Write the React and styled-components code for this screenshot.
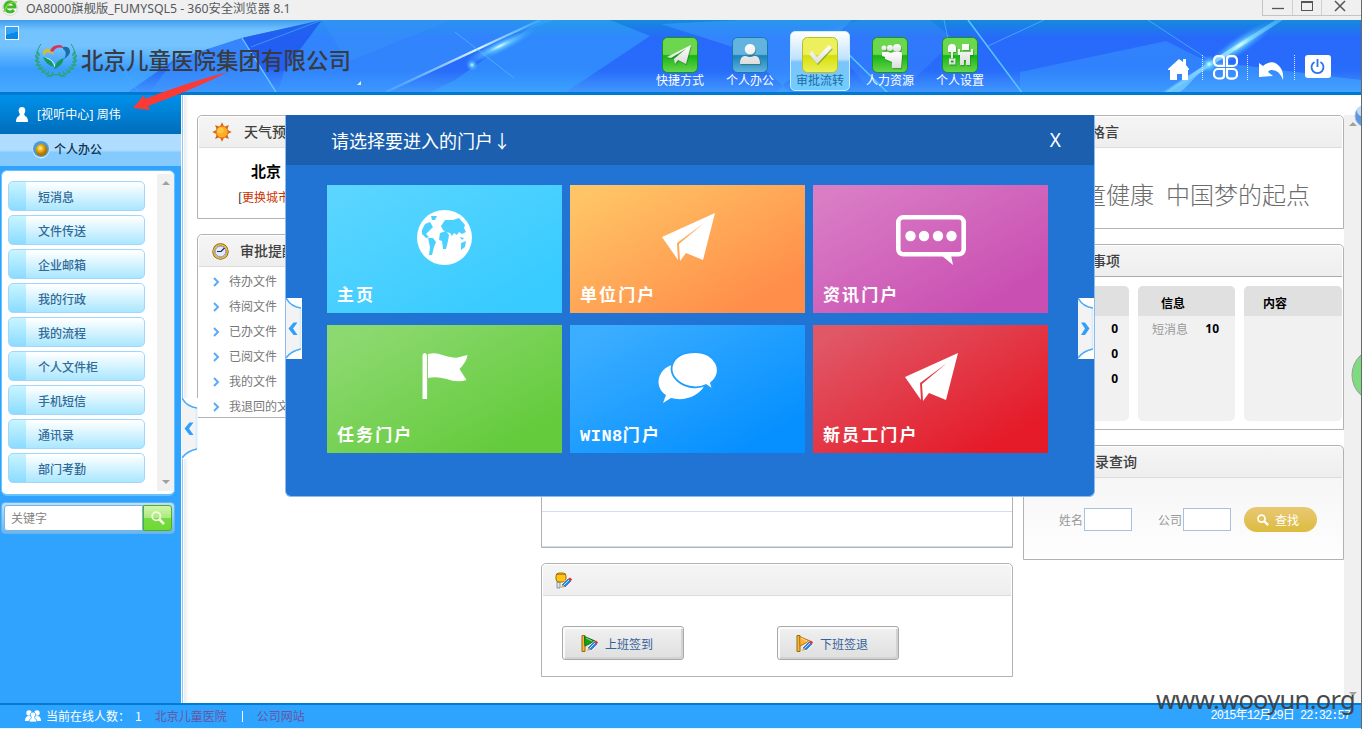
import React from "react";
import styled, { createGlobalStyle, css } from "styled-components";

const sans = '"Noto Sans", "Noto Sans CJK SC", sans-serif';
const cjk = '"Noto Sans CJK SC", sans-serif';

const Global = createGlobalStyle`
  * { box-sizing: border-box; }
  body { margin: 0; overflow: hidden; font-family: ${cjk}; font-size: 12px; }
  svg { display: block; flex: none; }
`;

const Window = styled.div`
  position: relative;
  width: 1362px;
  height: 729px;
  display: flex;
  flex-direction: column;
  background: #fff;
  border-right: 1px solid #66686b;
`;

/* ---------- title bar ---------- */
const TitleBar = styled.div`
  height: 20px;
  flex: none;
  display: flex;
  align-items: flex-start;
  background: #f0f0f0;
  padding-left: 2px;
`;
const TitleText = styled.span`
  flex: 1;
  padding-left: 6px;
  font: 12.3px/17px ${sans};
  color: #55585e;
`;
const WindowButtons = styled.div`
  display: flex;
  height: 16px;
  width: 99px;
  border: 1px solid #c4c4c4;
  border-width: 0 0 1px 1px;
`;
const WindowButton = styled.div`
  width: ${(p) => p.$w}px;
  display: flex;
  justify-content: center;
  border-left: ${(p) => (p.$first ? 0 : 1)}px solid #cfcfcf;
`;

/* ---------- header ---------- */
const HeaderBar = styled.header`
  position: relative;
  height: 75px;
  flex: none;
  display: flex;
  border-bottom: 3px solid #0079d2;
  background: #2b74fb;
`;
const Backdrop = styled.svg`
  position: absolute;
  inset: 0;
`;
const CornerSquare = styled.i`
  position: absolute;
  left: 5px;
  top: 6px;
  width: 14px;
  height: 14px;
  border: 1px solid #fff;
  background: linear-gradient(165deg, #35a4f5 50%, #0889ea 52%);
`;
const Brand = styled.div`
  position: relative;
  width: 650px;
  display: flex;
  align-items: flex-start;
  padding: 22px 0 0 34px;
  gap: 3px;
`;
const BrandName = styled.h1`
  margin: -4px 0 0;
  font: 500 22.5px/42px ${cjk};
  height: 42px;
  color: #393b42;
  white-space: nowrap;
`;
const Nav = styled.nav`
  position: relative;
  flex: 1;
  display: flex;
  gap: 10px;
  padding-top: 11px;
`;
const NavItem = styled.a`
  width: 60px;
  height: 60px;
  display: flex;
  flex-direction: column;
  align-items: center;
  padding-top: ${(p) => (p.$active ? 5 : 6)}px;
  border-radius: 5px;
  font: 12px/14px ${cjk};
  color: ${(p) => (p.$active ? "#1c6ba8" : "#fff")};
  white-space: nowrap;
  ${(p) =>
    p.$active &&
    css`
      border: 1px solid #c9ecff;
      background: linear-gradient(#fff 0, #c0e2fd 46%, #7cc4fb 52%, #6fcdfd 100%);
    `}
`;
const Tools = styled.div`
  position: relative;
  display: flex;
  align-items: flex-start;
  padding: 35px 30px 0 0;
`;
const Dots = styled.i`
  height: 25px;
  border-left: 1px dotted #d8ecff;
  margin: 0 ${(p) => p.$after}px 0 ${(p) => p.$before}px;
`;

/* ---------- body ---------- */
const Body = styled.div`
  flex: 1;
  min-height: 0;
  display: flex;
`;
const Sidebar = styled.aside`
  position: relative;
  width: 182px;
  flex: none;
  background: #2fa3fd;
  border-right: 1px solid #fff;
`;
const UserBar = styled.div`
  height: 39px;
  display: flex;
  align-items: center;
  gap: 9px;
  padding-left: 16px;
  color: #fff;
  font: 12px/38px ${sans};
  letter-spacing: 0.1px;
  background: linear-gradient(#0091ea, #006dbb);
`;
const SectionBar = styled.div`
  height: 32px;
  display: flex;
  align-items: center;
  padding: 0 0 2px 32px;
  gap: 4px;
  font: 500 12px/30px ${cjk};
  color: #0d3453;
  background: linear-gradient(#b0ddff 0 50%, #85cafc 58% 100%);
`;
const MenuBox = styled.div`
  display: flex;
  justify-content: space-between;
  margin: 4px 6px 0 1px;
  height: 326px;
  border: 2px solid #68c3fc;
  border-width: 1px 1px 2px;
  border-radius: 6px;
  background: #fff;
`;
const MenuList = styled.div`
  display: flex;
  flex-direction: column;
  gap: 4px;
  padding: 10px 0 0 6px;
`;
const MenuItem = styled.a`
  width: 137px;
  height: 30px;
  padding-left: 29px;
  border: 1px solid #a1d7fe;
  border-radius: 5px;
  font: 500 12px/30px ${cjk};
  color: #316b98;
  background:
    linear-gradient(#c9f5ff, #8bdbff) 0 0 / 17px 100% no-repeat,
    linear-gradient(#fdffff 5%, #aee8ff 95%);
`;
const SideScroll = styled.div`
  display: flex;
  flex-direction: column;
  justify-content: space-between;
  align-items: center;
  width: 17px;
  height: 317px;
  margin-top: 3px;
  padding: 7px 0;
  background: #f1f1f1;
`;
const Arrow = styled.i`
  border: 4px solid transparent;
  ${(p) =>
    p.$up
      ? "border-top: 0; border-bottom-color: #a0a0a0;"
      : "border-bottom: 0; border-top-color: #a0a0a0;"}
`;
const SearchBox = styled.div`
  display: flex;
  height: 32px;
  margin: 6px 6px 0 1px;
  padding: 2px;
  border: 1px solid #67b4ec;
  border-radius: 4px;
  background: linear-gradient(#bde0fb, #6ab6ef);
`;
const SearchField = styled.div`
  flex: 1;
  padding-left: 6px;
  border: 1px solid #73b6e8;
  border-radius: 3px 0 0 3px;
  background: #fff;
  color: #858585;
  font: 12px/23px ${cjk};
`;
const SearchButton = styled.div`
  width: 29px;
  display: flex;
  align-items: center;
  justify-content: center;
  border: 1px solid #52ae22;
  border-radius: 0 3px 3px 0;
  background: linear-gradient(#d1f6ad 0, #abea7c 48%, #78d945 50%, #6edb32 100%);
`;

const Main = styled.main`
  position: relative;
  flex: 1;
  display: flex;
  padding-top: 20px;
  border-left: 1px solid #8ec9f7;
  background: linear-gradient(90deg, #ececec, #fff 5px) 1px 0 / 5px 100% no-repeat, #fff;
`;
const Column = styled.div`
  width: ${(p) => p.$w}px;
  margin-left: ${(p) => p.$gap}px;
  display: flex;
  flex-direction: column;
  gap: 15px;
`;
const PageScroll = styled.div`
  flex: 1;
  display: flex;
  flex-direction: column;
  align-items: center;
  justify-content: space-between;
  padding: 7px 0 7px;
  background: #f0f0f0;
`;
const Panel = styled.section`
  height: ${(p) => p.$h}px;
  border: 1px solid #b2b2b2;
  border-radius: 5px 5px 0 0;
  background: ${(p) => (p.$tint ? "linear-gradient(#f3f3f3, #fefefe)" : "#fff")};
`;
const PanelHead = styled.div`
  height: 32px;
  margin: 0 1px;
  display: flex;
  align-items: center;
  padding-left: ${(p) => p.$pad || 13}px;
  gap: ${(p) => p.$gap || 9}px;
  border-top: 1px solid #fff;
  border-bottom: 1px solid ${(p) => (p.$strong ? "#aaa" : "#dcdcdc")};
  border-radius: 4px 4px 0 0;
  background: linear-gradient(#f5f5f5, #eee);
  font: 500 14px/26px ${cjk};
  color: #404040;
`;
const HeadText = styled.span`
  height: 29px;
`;
const Weather = styled.div`
  padding: 10px 0 0 40px;
  color: #000;
  font: 12px/27px ${cjk};
`;
const City = styled.div`
  padding-left: 13px;
  font: 700 15px/25px ${cjk};
`;
const CityLink = styled.span`
  color: #cc3300;
`;
const FileRow = styled.div`
  height: 25px;
  display: flex;
  align-items: center;
  gap: 9px;
  padding: 4px 0 0 15px;
  color: #787878;
  font: 12px/21px ${cjk};
  span { height: 23px; }
`;
const ListRow = styled.div`
  height: ${(p) => p.$h}px;
  border-bottom: 1px solid #cfdfec;
`;
const Motto = styled.div`
  padding: 26px 33px 0 0;
  text-align: right;
  font: 300 24px/40px ${cjk};
  color: #6c6c6c;
  white-space: nowrap;
`;
const CardRow = styled.div`
  display: flex;
  gap: 9px;
  padding: 9px 1px 0 8px;
`;
const Card = styled.div`
  width: 97px;
  height: 135px;
  border-radius: 5px;
  overflow: hidden;
  background: #f1f1f1;
  &:last-child { flex: 1; }
`;
const CardHead = styled.div`
  height: 30px;
  padding-left: ${(p) => p.$pad || 0}px;
  background: #e0e0e0;
  font: 700 12px/34px ${cjk};
`;
const CardLine = styled.div`
  height: 25px;
  display: flex;
  justify-content: space-between;
  padding: 0 ${(p) => p.$right}px 0 14px;
  color: #999;
  font: 12px/26px ${cjk};
  b { color: #000; font: 700 12px/26px "Noto Sans", sans-serif; }
`;
const LookupForm = styled.div`
  display: flex;
  align-items: center;
  padding: 29px 0 0 35px;
  color: #999;
  font: 12px/22px ${cjk};
`;
const Box = styled.span`
  width: 48px;
  height: 23px;
  margin: 0 ${(p) => p.$after}px 0 1px;
  border: 1px solid #a9c1e0;
  background: #fff;
`;
const GoldButton = styled.div`
  width: 73px;
  height: 25px;
  display: flex;
  align-items: center;
  padding-left: 13px;
  gap: 6px;
  border-radius: 13px;
  color: #fff;
  font: 12px/27px ${cjk};
  background: linear-gradient(#e9c875, #dcbc3e);
`;
const ClockRow = styled.div`
  display: flex;
  gap: 93px;
  padding: 30px 0 0 20px;
`;
const ClockButton = styled.div`
  width: 122px;
  height: 34px;
  display: flex;
  align-items: center;
  gap: 6px;
  padding-left: 18px;
  border: 1px solid #a9a9a9;
  border-radius: 3px;
  box-shadow: inset 2px 2px 0 #fbfbfb, inset -2px -2px 0 #d3d3d3;
  background: linear-gradient(#f1f1f1, #dfdfdf);
  color: #33619b;
  font: 12px/35px ${cjk};
`;

/* ---------- portal dialog ---------- */
const Dialog = styled.div`
  position: absolute;
  left: 285px;
  top: 115px;
  width: 810px;
  height: 382px;
  border: 1px solid #8cbcef;
  border-top: 0;
  border-radius: 0 0 6px 6px;
  background: #2174d4;
`;
const DialogHead = styled.div`
  height: 50px;
  display: flex;
  justify-content: space-between;
  padding: 0 33px 0 45px;
  background: #1b5fae;
  color: #fff;
  font: 18px/50px ${cjk};
`;
const CloseMark = styled.span`
  font: 19px/50px "Noto Sans", sans-serif;
`;
const Tiles = styled.div`
  display: grid;
  grid-template-columns: repeat(3, 235px);
  grid-auto-rows: 128px;
  gap: 12px 8px;
  padding: 20px 0 0 41px;
`;
const Tile = styled.a`
  display: flex;
  flex-direction: column;
  justify-content: space-between;
  align-items: center;
  padding: 22px 0 3px;
  background: linear-gradient(151deg, ${(p) => p.$from} 8%, ${(p) => p.$to} 85%);
`;
const TileName = styled.span`
  align-self: stretch;
  padding-left: 10px;
  color: #fff;
  font: 700 17px/26px "Liberation Mono", ${cjk};
  letter-spacing: 2.1px;
`;
const Latin = styled.span`
  letter-spacing: 0.5px;
`;
const Handle = styled.div`
  position: absolute;
  top: ${(p) => p.$top}px;
  left: ${(p) => p.$left}px;
`;

/* ---------- footer & overlays ---------- */
const Footer = styled.footer`
  height: 26px;
  flex: none;
  display: flex;
  align-items: center;
  padding-left: 25px;
  border-top: 2px solid #007cd4;
  border-bottom: 1px solid #e8f4fd;
  background: #2ea4fe;
  color: #fff;
  font: 12px/22px ${cjk};
`;
const FootText = styled.span`
  height: 24px;
  margin-left: ${(p) => p.$left}px;
  color: ${(p) => (p.$visited ? "#6955a4" : "#fff")};
`;
const Stamp = styled.time`
  height: 24px;
  margin: 0 11px 0 auto;
  font: 12px/23px "Liberation Mono", ${cjk};
  letter-spacing: -0.95px;
`;
const Divider = styled.i`
  width: 1px;
  height: 11px;
  margin: 0 14px 0 15px;
  background: #fff;
`;
const Overlay = styled.svg`
  position: absolute;
  left: ${(p) => p.$x}px;
  top: ${(p) => p.$y}px;
`;
const Watermark = styled.div`
  position: absolute;
  right: 6px;
  top: 683px;
  font: 25.5px/32px "Noto Sans", sans-serif;
  letter-spacing: -0.72px;
  color: #3b3d40;
  opacity: 0.93;
`;

/* ---------- drawings ---------- */
const HeaderArt = () => (
  <Backdrop width="1361" height="72" viewBox="0 0 1361 72" preserveAspectRatio="none">
    <defs>
      <linearGradient id="hLeft" x2="0" y2="1">
        <stop offset="0" stopColor="#3f9df0" />
        <stop offset=".14" stopColor="#72c2fe" />
        <stop offset=".36" stopColor="#74c3fe" />
        <stop offset=".68" stopColor="#3a9dfd" />
        <stop offset="1" stopColor="#48a9fe" />
      </linearGradient>
      <linearGradient id="hMid" x2="0" y2="1">
        <stop offset="0" stopColor="#158add" />
        <stop offset=".25" stopColor="#2869fb" />
        <stop offset=".7" stopColor="#286cfa" />
        <stop offset="1" stopColor="#4096fd" />
      </linearGradient>
      <linearGradient id="beam" x1="0" y1="1" x2="1" y2="0">
        <stop offset="0" stopColor="#6dc8ff" stopOpacity=".3" />
        <stop offset=".6" stopColor="#dffaff" />
        <stop offset="1" stopColor="#45bfff" stopOpacity=".5" />
      </linearGradient>
      <radialGradient id="glow"><stop offset="0" stopColor="#eaffff" /><stop offset=".3" stopColor="#70dcff" stopOpacity=".75" /><stop offset="1" stopColor="#36a7ff" stopOpacity="0" /></radialGradient>
    </defs>
    <rect width="1361" height="72" fill="url(#hMid)" />
    <path d="M0 0H322L242 18L174 40L128 72H0Z" fill="url(#hLeft)" />
    <path d="M174 40L242 18L276 72H150Z" fill="#3f97fd" opacity=".6" />
    <path d="M242 18L322 0L284 51L262 49Z" fill="#225bf0" opacity=".75" />
    <path d="M284 51L322 0H555L500 18L386 72H278Z" fill="#3b99ff" opacity=".55" />
    <path d="M322 0H452L347 42Z" fill="#3592f7" opacity=".5" />
    <path d="M455 60L540 0H610L650 16L566 72H430Z" fill="#3aafff" opacity=".45" />
    <path d="M742 0H852L776 72H790L742 30L661 4Z" fill="#42a7ff" opacity=".45" />
    <path d="M860 0H930L955 20L900 72H872L820 12Z" fill="#4698ff" opacity=".3" />
    <path d="M1020 52L1166 21L1216 46L1166 72H1020Z" fill="#39a0ff" opacity=".45" />
    <path d="M1167 72L1216 42L1361 60V72Z" fill="#4ab2ff" opacity=".45" />
    <g fill="none">
      <path d="M242 18L276 72" stroke="#67caff" strokeWidth="1.3" />
      <path d="M322 0L251 27M120 45L138 72" stroke="#45abff" opacity=".7" />
      <path d="M386 72L540 0" stroke="url(#beam)" strokeWidth="2.3" />
      <path d="M455 12L514 58" stroke="#56baff" opacity=".7" />
      <path d="M832 18L887 72M968 0L1026 78" stroke="#57c8ff" strokeWidth="1.5" />
      <path d="M988 26L1044 0M944 0L952 38M1148 0L1206 38" stroke="#4bb5ff" opacity=".75" />
      <path d="M1160 76L1284 -3" stroke="url(#beam)" strokeWidth="4" />
    </g>
    <path d="M1150 82L1209 43L1184 69L1166 82Z" fill="#80d4ff" opacity=".65" />
    <ellipse cx="500" cy="26" rx="40" ry="7" transform="rotate(-26 500 26)" fill="url(#glow)" />
    <circle cx="472" cy="45" r="6" fill="url(#glow)" />
    <ellipse cx="1240" cy="25" rx="42" ry="9" transform="rotate(-34 1240 25)" fill="url(#glow)" />
    <circle cx="1209" cy="44" r="9" fill="url(#glow)" />
  </Backdrop>
);

const leafAngles = [0, 1, 2, 3, 4, 5, 6, 7];
const Logo = () => (
  <svg width="44" height="36" viewBox="0 0 44 36">
    <g fill="none" stroke="#279f72" strokeWidth="1">
      <path d="M7 2C-1 13 2 29 17 34M37 2C45 13 42 29 27 34M13 35Q22 30 31 35" />
    </g>
    <g fill="#2ca877">
      {leafAngles.map((i) => {
        const t = (200 - i * 14) * (Math.PI / 180);
        const x = 22 + 19 * Math.cos(t), y = 17 + 16 * Math.sin(t);
        return (
          <g key={i}>
            <ellipse cx={x} cy={y} rx="3" ry="1.1" transform={`rotate(${60 - i * 18} ${x} ${y})`} />
            <ellipse cx={44 - x} cy={y} rx="3" ry="1.1" transform={`rotate(${120 + i * 18} ${44 - x} ${y})`} />
          </g>
        );
      })}
    </g>
    <path d="M9 12Q9 6 15 7Q19 8 20 13Q15 9 12 11Q10 12 11 15Z" fill="#d9bd2f" />
    <path d="M16 9Q18 3 25 3Q29 3 29 6Q22 4 19 10Z" fill="#d93355" />
    <path d="M29 5Q36 4 36 10Q35 14 30 17Q34 10 29 7Z" fill="#176fa8" />
    <g fill="none" stroke="#e7fbff" strokeWidth="1"><path d="M12 16Q20 18 21 25L29 17" /></g>
    <path d="M9 15Q18 17 20 25Q12 23 9 15M30 16Q22 18 20 27Q28 25 30 16" fill="#129a5c" />
  </svg>
);

const palette = {
  green: ["#6bd64e", "#16b416", "#149420"],
  blue: ["#62b4de", "#1b82b9", "#1878af"],
  yellow: ["#ecf05c", "#d5df08", "#b5bf28"],
};
const glyphs = {
  plane: <path d="M5 20L29 8L24 27L16 23L13 27L12 22L25 11L9 21Z" />,
  person: <path d="M18 7a5.3 5.3 0 1 0 .1 0M8 27q0-9 6-8q4 2 8 0q6-1 6 8z" />,
  check: <path d="M7 17L10 14L15 20L27 8L30 11L15 27Z" />,
  people: (
    <g>
      <circle cx="12" cy="11" r="2.5" /><circle cx="18" cy="11" r="3" /><circle cx="25" cy="11" r="4" />
      <path d="M10 15h6l3 1l3-1h6q3 0 2 5l-1 11h-9v-6l-7-3v-2l-3-1z" />
    </g>
  ),
  tools: (
    <g>
      <path d="M10 7a4 4 0 0 0-4 4v4h3v6h2v-6h3v-4a4 4 0 0 0-4-4M7 21.500h6.500v6H7zM20 7h7v6h-7zM16 12h2v3h11v-3h2v6h-3v10h-4v-5h-2v5h-4V18h-2z" />
      <rect x="9" y="23.500" width="2.500" height="2" fill="#25a526" />
    </g>
  ),
};
const AppIcon = ({ kind, color }) => {
  const [a, b, edge] = palette[color];
  return (
    <svg width="36" height="36" viewBox="0 0 36 36">
      <defs>
        <linearGradient id={`app-${kind}`} x2="0" y2="1">
          <stop offset="0" stopColor={a} /><stop offset=".48" stopColor={a} /><stop offset=".52" stopColor={b} /><stop offset="1" stopColor={a} />
        </linearGradient>
        <linearGradient id={`ink-${kind}`} x2="0" y2="1"><stop stopColor="#fff" /><stop offset="1" stopColor="#dcdcdc" /></linearGradient>
      </defs>
      <rect x=".5" y=".5" width="35" height="35" rx="5" fill={`url(#app-${kind})`} stroke={edge} />
      <g fill="#145014" opacity=".35" transform="translate(.8 1.2)">{glyphs[kind]}</g>
      <g fill={`url(#ink-${kind})`}>{glyphs[kind]}</g>
    </svg>
  );
};

const Plane = () => (
  <svg width="54" height="60" viewBox="-1 0 54 60">
    <path d="M0 30L53 6L41 53L24 46L18 54L17 37L42 16L15 36L16 53Z" fill="#fff" />
  </svg>
);
const Globe = ({ sea }) => (
  <svg width="56" height="60" viewBox="0 0 56 60">
    <circle cx="27.500" cy="30.500" r="27.500" fill="#fff" />
    <g fill={sea}>
      <path d="M5 23L8 17L13 15L16 20L13 23L11 25L9 27L12 30L9 31L5 27Z" />
      <path d="M14 9L20 9L18 13L15 13Z" />
      <path d="M11 31L16 31L19 35L17 40L15 48H12L13 40Z" />
      <path d="M24 19L28 13L36 13L42 11L48 18L47 21L49 25L45 27L42 25L40 28L37 26L35 29L33 26L29 25L26 23Z" />
      <path d="M23 26L29 24L32 28L31 34L29 42H26L25 34L22 33Z" />
      <path d="M44 36L49 34L48 40L44 43ZM43 30L47 31L45 33Z" />
    </g>
  </svg>
);
const Message = () => (
  <svg width="70" height="60" viewBox="0 0 70 60">
    <path d="M45 48L57 58L55 48" fill="#fff" />
    <rect x="2.3" y="10.3" width="65.4" height="37" rx="5" fill="none" stroke="#fff" strokeWidth="4.6" />
    <g fill="#fff">{[14.5, 28, 42, 55.5].map((x) => <circle key={x} cx={x} cy="29" r="5.2" />)}</g>
  </svg>
);
const Flag = () => (
  <svg width="46" height="60" viewBox="-.5 0 46 60">
    <path d="M0 8Q2 4 4.600 8V52H0ZM5.500 7Q13 5 20 8Q33 12 37 10L45 8Q44 15 37 22L44 33Q35 36 24 32Q14 29 5.500 31Z" fill="#fff" />
  </svg>
);
const Chats = ({ line }) => (
  <svg width="62" height="60" viewBox="0 0 62 60">
    <path d="M19 17C2 19-5 39 9 48L6 56L14 51C28 55 43 48 47 39Z" fill="#fff" />
    <path d="M38 5C14 5 8 25 22 35C31 42 43 41 49 38L56 43L54 36C68 25 59 5 38 5Z" fill="#fff" stroke={line} strokeWidth="1.8" />
  </svg>
);

const Grip = ({ right, tall = 61 }) => (
  <svg width="16" height={tall} viewBox={`0 0 16 ${tall}`}>
    <rect width="16" height={tall} fill="#fff" />
    <path d={`M0 1Q5 9 15 10V${tall - 10}Q5 ${tall - 8} 0 ${tall - 1}Z`} fill="#f3f3f3" />
    <path d={`M14.5 10V${tall - 10}`} stroke="#d8ecff" strokeWidth="2" />
    <path d={`M0 0Q5 9 15 10M0 ${tall - 1}Q5 ${tall - 8} 15 ${tall - 10}`} fill="none" stroke="#48abfb" strokeWidth="1.5" />
    <path
      d={right ? "M3 24.500h4l4.500 6-4.500 6.500H3l4-6.500z" : "M11.500 24.500H7.500l-5 6 5 6.500h4l-4.500-6.500z"}
      fill="#31a0fc"
    />
  </svg>
);

const Lens = ({ s = 14, c = "#fff", w = 2 }) => (
  <svg width={s} height={s} viewBox="0 0 14 14" fill="none" stroke={c}>
    <circle cx="5.3" cy="5.3" r="4.1" strokeWidth={w} />
    <path d="M8.5 8.5L13 13" strokeWidth={w + 0.7} />
  </svg>
);
const Pencil = () => (
  <g transform="translate(6 5)">
    <path d="M0 11L1 7L7 1L11 4L4 11Z" fill="#fff" />
    <path d="M1 8L7 2L10 4L4 10Z" fill="#2784ea" stroke="#1852a6" strokeWidth=".6" />
    <path d="M2.5 8.5L8 3" stroke="#b6e5ff" />
    <path d="M7 2L9 .5L11 2.5L10 4Z" fill="#e42636" />
    <path d="M0 11L1 8L4 10Z" fill="#dda74b" />
  </g>
);
const FlagPencil = ({ color, edge }) => (
  <svg width="18" height="17" viewBox="0 0 18 17">
    <path d="M1 .5H4V16.5H1Z" fill="#f1ba3c" stroke="#9c6908" />
    <path d="M3.5 1.5L14 6L4 11Z" fill={color} stroke={edge} />
    <path d="M5 3L11 6" stroke="#fff" opacity=".55" />
    <Pencil />
  </svg>
);
const WriterIcon = () => (
  <svg width="17" height="17" viewBox="0 0 17 17">
    <path d="M2 10H5V16H2Z" fill="#dfe4ec" stroke="#515b70" strokeWidth=".6" />
    <rect x="1" y="1" width="10" height="9" rx="3" fill="#ffc512" stroke="#9f6d05" />
    <path d="M2 2.5H10" stroke="#b98514" />
    <Pencil />
  </svg>
);
const Sun = () => (
  <svg width="20" height="20" viewBox="0 0 20 20">
    <g fill="#d4641e">
      {[0, 45, 90, 135, 180, 225, 270, 315].map((a) => (
        <path key={a} d="M8 4.500L10 .2L12 4.500Z" transform={`rotate(${a} 10 10)`} />
      ))}
    </g>
    <circle cx="10" cy="10" r="6" fill="#ffae21" stroke="#e07316" />
    <circle cx="8.5" cy="8.5" r="3" fill="#ffd455" opacity=".7" />
  </svg>
);
const Clock = () => (
  <svg width="17" height="17" viewBox="0 0 17 17">
    <circle cx="8.5" cy="8.5" r="7" fill="#dfe7ff" stroke="#7b5b09" strokeWidth="2.3" />
    <circle cx="8.5" cy="8.5" r="6.7" fill="none" stroke="#f0c13b" strokeWidth="1.4" />
    <circle cx="8.5" cy="8.5" r="5.3" fill="#e1e8ff" stroke="#7b80d9" strokeWidth=".8" />
    <path d="M5 8.500H9L12.500 5" fill="none" stroke="#202a4a" strokeWidth="1.2" />
  </svg>
);
const Bullet = () => (
  <svg width="7" height="10" viewBox="0 0 7 10"><path d="M1 1L5 5L1 9" fill="none" stroke="#5aaafa" strokeWidth="2" /></svg>
);

const navItems = [
  ["plane", "green", "快捷方式"],
  ["person", "blue", "个人办公"],
  ["check", "yellow", "审批流转"],
  ["people", "green", "人力资源"],
  ["tools", "green", "个人设置"],
];
const menu = ["短消息", "文件传送", "企业邮箱", "我的行政", "我的流程", "个人文件柜", "手机短信", "通讯录", "部门考勤"];
const files = ["待办文件", "待阅文件", "已办文件", "已阅文件", "我的文件", "我退回的文件"];
const tiles = [
  { name: "主页", from: "#59d5ff", to: "#38cbff", icon: <Globe sea="#4bd1ff" /> },
  { name: "单位门户", from: "#ffc465", to: "#ff8e4a", icon: <Plane /> },
  { name: "资讯门户", from: "#d97dc5", to: "#c94fb2", icon: <Message /> },
  { name: "任务门户", from: "#8dd971", to: "#64cb3c", icon: <Flag /> },
  { latin: "WIN8", name: "门户", from: "#3caeff", to: "#0690ff", icon: <Chats line="#219fff" /> },
  { name: "新员工门户", from: "#e05766", to: "#e51b29", icon: <Plane /> },
];

export default function App() {
  return (
    <Window>
      <Global />
      <TitleBar>
        <svg width="18" height="18" viewBox="0 0 18 18">
          <circle cx="8" cy="8" r="7.4" fill="#fff" stroke="#d3d3d3" />
          <path d="M12 10A5 5 0 1 1 13 7H5" fill="none" stroke="#42b92a" strokeWidth="3" />
          <path d="M2 12Q5 1 15 2" fill="none" stroke="#8ad548" strokeWidth="1.3" />
        </svg>
        <TitleText>OA8000旗舰版_FUMYSQL5 - 360安全浏览器 8.1</TitleText>
        <WindowButtons>
          <WindowButton $w={29} $first><svg width="12" height="12"><path d="M0 8.5H12" stroke="#555" strokeWidth="1.3" /></svg></WindowButton>
          <WindowButton $w={29}><svg width="12" height="12"><rect x=".5" y="1.5" width="11" height="9" fill="none" stroke="#555" /><path d="M0 2H12" stroke="#555" strokeWidth="2" /></svg></WindowButton>
          <WindowButton $w={36}><svg width="12" height="12"><path d="M1 1L11 11M11 1L1 11" stroke="#555" strokeWidth="1.5" /></svg></WindowButton>
        </WindowButtons>
      </TitleBar>

      <HeaderBar>
        <HeaderArt />
        <CornerSquare />
        <Brand>
          <Logo />
          <BrandName>北京儿童医院集团有限公司</BrandName>
        </Brand>
        <Nav>
          {navItems.map(([kind, color, label]) => (
            <NavItem key={kind} $active={kind === "check"}>
              <AppIcon kind={kind} color={color} />
              {label}
            </NavItem>
          ))}
        </Nav>
        <Tools>
          <svg width="22" height="26" viewBox="0 0 22 26"><path d="M0 14L11 4L15 7V4H18V10L21 14V15H20V25H14V19H9V25H2V15H0Z" fill="#fff" /></svg>
          <Dots $before={12} $after={10} />
          <svg width="25" height="25" viewBox="0 0 25 25" fill="none" stroke="#fff" strokeWidth="2.2">
            <path d="M5 1.2h3a3 3 0 0 1 3 3v6.6H5a4 4 0 0 1-4-4v-1.600a4 4 0 0 1 4-4zM17 1.2h3a4 4 0 0 1 4 4V7a4 4 0 0 1-4 4h-6V4.200a3 3 0 0 1 3-3zM5 14h6v6.500a3 3 0 0 1-3 3H5a4 4 0 0 1-4-4V18a4 4 0 0 1 4-4zM14 14h6a4 4 0 0 1 4 4v1.600a4 4 0 0 1-4 4h-3a3 3 0 0 1-3-3z" />
          </svg>
          <Dots $before={9} $after={11} />
          <svg width="25" height="25" viewBox="0 0 25 25"><path d="M0 22V8L4 11Q14 3 21 12Q25 17 24 25Q20 14 12 15Q10 15 9 17L14 21Z" fill="#fff" /></svg>
          <Dots $before={10} $after={10} />
          <svg width="26" height="23" viewBox="0 0 26 23">
            <rect width="26" height="23" rx="3" fill="#fff" />
            <path d="M9.500 7A6 6 0 1 0 15.500 7M12.500 4V12" fill="none" stroke="#2873f0" strokeWidth="1.8" />
          </svg>
        </Tools>
      </HeaderBar>

      <Body>
        <Sidebar>
          <UserBar>
            <svg width="12" height="15" viewBox="0 0 12 15"><path d="M6 0C2 0 2 5 4 7L3 9Q0 10 0 15H12Q12 10 9 9L8 7C10 5 10 0 6 0Z" fill="#fff" /></svg>
            [视听中心] 周伟
          </UserBar>
          <SectionBar>
            <svg width="18" height="20" viewBox="0 0 18 20">
              <defs><radialGradient id="orb" cx=".4" cy=".35"><stop stopColor="#fff3a0" /><stop offset=".5" stopColor="#eeb010" /><stop offset="1" stopColor="#a8760a" /></radialGradient></defs>
              <circle cx="9" cy="11" r="8.500" fill="#e2f3ff" opacity=".8" />
              <circle cx="9" cy="10" r="8" fill="#4d9bd6" />
              <circle cx="9.500" cy="11" r="6" fill="url(#orb)" />
            </svg>
            个人办公
          </SectionBar>
          <MenuBox>
            <MenuList>{menu.map((m) => <MenuItem key={m}>{m}</MenuItem>)}</MenuList>
            <SideScroll><Arrow $up /><Arrow /></SideScroll>
          </MenuBox>
          <SearchBox>
            <SearchField>关键字</SearchField>
            <SearchButton><Lens s={14} c="#f4f8e8" w={1.8} /></SearchButton>
          </SearchBox>
        </Sidebar>

        <Main>
          <Column $w={334} $gap={14}>
            <Panel $h={104}>
              <PanelHead $pad={13} $gap={12}><Sun /><HeadText>天气预报</HeadText></PanelHead>
              <Weather>
                <City>北京</City>
                [<CityLink>更换城市</CityLink>]
              </Weather>
            </Panel>
            <Panel $h={184}>
              <PanelHead $pad={13} $gap={11}><Clock /><HeadText>审批提醒</HeadText></PanelHead>
              {files.map((f) => <FileRow key={f}><Bullet /><span>{f}</span></FileRow>)}
            </Panel>
          </Column>
          <Column $w={472} $gap={10}>
            <Panel $h={433}>
              <PanelHead />
              <ListRow $h={364} />
              <ListRow $h={35} />
            </Panel>
            <Panel $h={114}>
              <PanelHead $pad={12}><WriterIcon /></PanelHead>
              <ClockRow>
                <ClockButton><FlagPencil color="#17a316" edge="#0d6d13" />上班签到</ClockButton>
                <ClockButton><FlagPencil color="#ffb23b" edge="#b67410" />下班签退</ClockButton>
              </ClockRow>
            </Panel>
          </Column>
          <Column $w={321} $gap={10}>
            <Panel $h={114}>
              <PanelHead $pad={38}><HeadText>每日格言</HeadText></PanelHead>
              <Motto>儿童健康&ensp;中国梦的起点</Motto>
            </Panel>
            <Panel $h={186}>
              <PanelHead $pad={39} $strong><HeadText>待办事项</HeadText></PanelHead>
              <CardRow>
                <Card>
                  <CardHead />
                  {[1, 2, 3].map((n) => <CardLine key={n} $right={11}><i /><b>0</b></CardLine>)}
                </Card>
                <Card>
                  <CardHead $pad={23}>信息</CardHead>
                  <CardLine $right={16}>短消息<b>10</b></CardLine>
                </Card>
                <Card><CardHead $pad={19}>内容</CardHead></Card>
              </CardRow>
            </Panel>
            <Panel $h={115} $tint>
              <PanelHead $pad={42}><HeadText>通讯录查询</HeadText></PanelHead>
              <LookupForm>
                姓名<Box $after={26} />公司<Box $after={13} />
                <GoldButton><Lens s={12} />查找</GoldButton>
              </LookupForm>
            </Panel>
          </Column>
          <PageScroll><Arrow $up /><Arrow /></PageScroll>
        </Main>
      </Body>

      <Footer>
        <svg width="16" height="13" viewBox="0 0 16 13" fill="#fff">
          <circle cx="4" cy="3" r="2.700" /><circle cx="12" cy="3" r="2.700" /><path d="M0 11Q0 6 4 6T7 10V11ZM9 11Q8 6 12 6T16 11Z" />
          <path d="M8 2a2.700 2.700 0 0 1 2 4.500Q9 8 10 8.500Q12 9 12 12H4Q4 9 6 8.500Q7 8 6 6.500A2.700 2.700 0 0 1 8 2Z" stroke="#2ea4fe" strokeWidth=".8" />
        </svg>
        <FootText $left={5}>当前在线人数：</FootText>
        <FootText $left={5}>1</FootText>
        <FootText $left={13} $visited>北京儿童医院</FootText>
        <Divider />
        <FootText $left={0} $visited>公司网站</FootText>
        <Stamp>2015年12月29日 22:32:57</Stamp>
      </Footer>

      <Handle $left={182} $top={398}><Grip /></Handle>
      <Dialog>
        <DialogHead><span>请选择要进入的门户↓</span><CloseMark>X</CloseMark></DialogHead>
        <Tiles>
          {tiles.map((t) => (
            <Tile key={t.name + t.from} $from={t.from} $to={t.to}>
              {t.icon}
              <TileName>{t.latin && <Latin>{t.latin}</Latin>}{t.name}</TileName>
            </Tile>
          ))}
        </Tiles>
        <Handle $left={0} $top={183}><Grip /></Handle>
        <Handle $left={792} $top={183}><Grip right /></Handle>
      </Dialog>

      <Overlay $x={130} $y={70} width="100" height="42" viewBox="0 0 100 42">
        <path d="M98 2Q58 12 15 29L14 25L3 38L20 40L18 36Q62 20 98 2Z" fill="#fb3a35" />
      </Overlay>
      <Overlay $x={357} $y={81} width="4" height="4"><path d="M4 0V4H0Z" fill="#f1e9dc" /></Overlay>
      <Overlay $x={1351} $y={345} width="10" height="64" viewBox="0 0 10 64">
        <circle cx="28" cy="30" r="27" fill="#7fdb7f" stroke="#9b9b9b" />
      </Overlay>
      <Overlay $x={1354} $y={104} width="7" height="25" viewBox="0 0 7 25">
        <circle cx="12" cy="12" r="11" fill="#5e97de" stroke="#9ebff0" />
        <ellipse cx="8" cy="7" rx="5" ry="5" fill="#c1dafb" />
      </Overlay>
      <Watermark>www.wooyun.org</Watermark>
    </Window>
  );
}
